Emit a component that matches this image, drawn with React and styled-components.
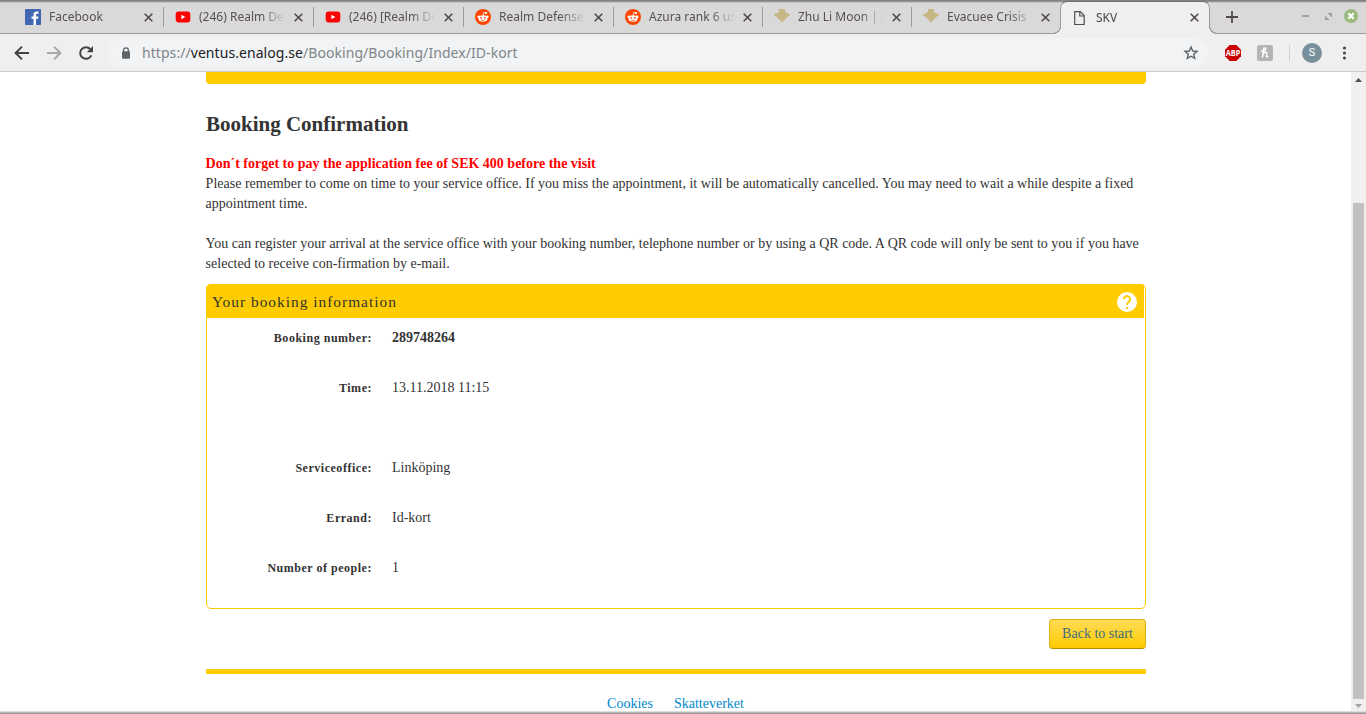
import React from 'react';
import styled, { createGlobalStyle } from 'styled-components';

const GlobalStyle = createGlobalStyle`
  * { box-sizing: border-box; }
  body { margin: 0; overflow: hidden; background: #fff; }
`;

const Window = styled.div`
  width: 1366px;
  height: 714px;
  display: flex;
  flex-direction: column;
  overflow: hidden;
  background: #fff;
`;

const TabStrip = styled.div`
  flex: none;
  height: 34px;
  display: flex;
  align-items: stretch;
  padding-left: 13px;
  background: linear-gradient(#828282 0 1px, #929292 1px 2px, #c4c4c4 2px 3px, #d9d9d9 3px);
  border-bottom: 1px solid #9c9c9c;
  font: 12px/16px 'Noto Sans', sans-serif;
  color: #5a4f50;
`;

const Tab = styled.div`
  position: relative;
  flex: none;
  width: ${(p) => p.$width}px;
  display: flex;
  align-items: center;
  padding: 1px 0 0 12px;
  &::after {
    content: '';
    position: absolute;
    right: -1px;
    top: 7px;
    width: 1px;
    height: 20px;
    background: ${(p) => (p.$last ? 'transparent' : '#9b9b9b')};
  }
`;

const corner = (side) => `radial-gradient(circle at ${side} 0, #d9d9d9 6.5px, #9c9c9c 7px 7.8px, #efefef 8.2px)`;

const ActiveTab = styled.div`
  position: relative;
  z-index: 1;
  flex: none;
  width: 150px;
  margin: 1px 0 -1px;
  display: flex;
  align-items: center;
  padding: 0 0 1px 11px;
  background: #efefef;
  border: 1px solid #9c9c9c;
  border-top-color: #6f6f6f;
  border-bottom: 0;
  border-radius: 7px 7px 0 0;
  color: #4a4546;
  &::before, &::after {
    content: '';
    position: absolute;
    bottom: 0;
    width: 8px;
    height: 8px;
  }
  &::before { left: -8px; background: ${corner('0')}; }
  &::after { right: -8px; background: ${corner('100%')}; }
`;

const Favicon = styled.span`
  flex: none;
  width: 16px;
  height: 16px;
  margin-right: 8px;
  svg { display: block; }
`;

const TabTitle = styled.span`
  flex: none;
  width: 87px;
  overflow: hidden;
  white-space: nowrap;
  mask-image: linear-gradient(90deg, #000 62px, transparent 86px);
`;

const CloseIcon = styled.svg`
  flex: none;
  width: 9px;
  height: 9px;
  margin-left: ${(p) => (p.$tight ? 6.5 : 7.5)}px;
`;

const NewTab = styled.svg`
  flex: none;
  width: 12px;
  height: 12px;
  margin: 11px 0 0 16px;
`;

const WindowButtons = styled.div`
  display: flex;
  align-items: center;
  gap: 16px;
  height: 32px;
  margin-left: auto;
  padding-right: 8px;
  svg { display: block; }
  svg:last-child { margin-left: -4px; }
`;

const Toolbar = styled.div`
  flex: none;
  height: 38px;
  display: flex;
  align-items: center;
  padding: 0 13px 0 14px;
  background: #efefef;
  border-bottom: 1px solid #cbcbcb;
`;

const NavButtons = styled.div`
  display: flex;
  gap: 16px;
  svg { display: block; }
`;

const Omnibox = styled.div`
  width: 1101px;
  height: 29px;
  margin-left: 14px;
  display: flex;
  align-items: center;
  padding: 0 10px 0 13px;
  border-radius: 15px;
  background: #f1f3f4;
  font: 14px/20px 'Noto Sans', sans-serif;
  color: #80868b;
  b { font-weight: 400; color: #202124; }
`;

const Url = styled.span`
  margin-left: 11px;
  letter-spacing: 0.06px;
  white-space: nowrap;
`;

const StarIcon = styled.svg`
  margin-left: auto;
`;

const Extensions = styled.div`
  flex: 1;
  display: flex;
  align-items: center;
  margin-left: 16px;
  gap: 16px;
  svg { display: block; }
`;

const ToolSeparator = styled.span`
  width: 1px;
  height: 16px;
  margin-right: -4px;
  background: #cfcfcf;
`;

const Avatar = styled.span`
  width: 20px;
  height: 20px;
  border-radius: 50%;
  background: #78909c;
  color: #fff;
  font: 11px/20px Roboto, sans-serif;
  text-align: center;
`;

const MenuDots = styled.svg`
  margin-left: 4px;
`;

const Viewport = styled.div`
  flex: 1;
  min-height: 0;
  display: flex;
`;

const Page = styled.main`
  flex: 1;
  padding-left: 206px;
  overflow: hidden;
  font: 14px/20px 'Liberation Serif', serif;
  color: #333;
`;

const Content = styled.div`
  width: 940px;
  display: flex;
  flex-direction: column;
`;

const TopBar = styled.div`
  height: 12px;
  border-radius: 0 0 4px 4px;
  background: #fc0;
`;

const Heading = styled.h1`
  margin: 25px 0 15px;
  font-size: 21px;
  line-height: 30px;
`;

const Warning = styled.strong`
  margin-left: -0.4px;
  color: #f00;
`;

const Paragraph = styled.p`
  margin: 0 0 ${(p) => p.$gap}px -0.4px;
  white-space: nowrap;
`;

const Panel = styled.section`
  height: 325px;
  border: 1px solid #fc0;
  border-radius: 5px;
  padding-right: 1px;
`;

const PanelHeader = styled.header`
  height: 34px;
  margin: -1px 0 0 -1px;
  padding: 1px 7px 0 6px;
  display: flex;
  align-items: center;
  justify-content: space-between;
  background: #fc0;
  border-radius: 5px 3px 0 0;
  font-size: 15.4px;
  letter-spacing: 1px;
`;

const Details = styled.dl`
  margin: 0;
  padding-top: 10px;
`;

const DetailRow = styled.div`
  display: flex;
  height: ${(p) => p.$height}px;
`;

const Label = styled.dt`
  width: 165px;
  text-align: right;
  font-size: 12px;
  font-weight: 700;
  letter-spacing: 0.52px;
`;

const Value = styled.dd`
  margin: 0 0 0 20px;
  font-weight: ${(p) => (p.$bold ? 700 : 400)};
`;

const BackButton = styled.button`
  align-self: flex-end;
  width: 97px;
  height: 30px;
  margin: 10px 0 20px;
  padding: 0;
  border: 1px solid #e0b010;
  border-bottom-color: #b38f00;
  border-radius: 4px;
  background: linear-gradient(#ffdb57, #fc0);
  color: #3d6a84;
  font: 14px/20px 'Liberation Serif', serif;
  white-space: nowrap;
`;

const FooterRule = styled.div`
  height: 5px;
  background: #fc0;
`;

const FooterLinks = styled.footer`
  display: flex;
  justify-content: center;
  gap: 21px;
  margin-top: 20px;
  padding-right: 1px;
`;

const FooterLink = styled.a`
  color: #08c;
`;

const Scrollbar = styled.div`
  flex: none;
  width: 15px;
  display: flex;
  flex-direction: column;
  align-items: center;
  padding: 6px 2px 5px;
  background: #f0f0f0;
  svg { flex: none; display: block; }
`;

const Thumb = styled.div`
  flex: none;
  width: 11px;
  height: 496px;
  margin: 121px 0 5px;
  background: #c1c1c1;
`;

const BottomEdge = styled.div`
  flex: none;
  height: 3px;
  background: linear-gradient(#dedede 0 1px, #b5b5b5 1px 2px, #999 2px);
`;

const Facebook = () => (
  <svg width="16" height="16" viewBox="0 0 16 16">
    <rect width="16" height="16" rx=".7" fill="#4267b2" />
    <path d="M11 16V9.8h2.1l.3-2.4H11V5.9c0-.7.2-1.2 1.2-1.2h1.3V2.6c-.2 0-1-.1-1.9-.1-1.8 0-3.1 1.1-3.1 3.2v1.7h-2v2.4h2V16z" fill="#fff" />
  </svg>
);

const YouTube = () => (
  <svg width="16" height="16" viewBox="0 0 16 16">
    <rect x=".7" y="2.6" width="14.6" height="10.8" rx="2.8" fill="#f00" />
    <path d="M6.4 5.8v4.4L10.4 8z" fill="#fff" />
  </svg>
);

const Reddit = () => (
  <svg width="16" height="16" viewBox="0 0 16 16">
    <circle cx="8" cy="8" r="8" fill="#ff4500" />
    <path d="M8 6.6l.7-3.1 2.3.5" fill="none" stroke="#fff" strokeWidth=".8" />
    <circle cx="11.1" cy="4.1" r="1.1" fill="#fff" />
    <circle cx="3.7" cy="7.8" r="1.3" fill="#fff" />
    <circle cx="12.3" cy="7.8" r="1.3" fill="#fff" />
    <ellipse cx="8" cy="9.5" rx="4.5" ry="3.3" fill="#fff" />
    <circle cx="6.1" cy="8.8" r=".9" fill="#ff4500" />
    <circle cx="9.9" cy="8.8" r=".9" fill="#ff4500" />
    <path d="M6.1 11q1.9 1.2 3.8 0" fill="none" stroke="#ff4500" strokeWidth=".7" />
  </svg>
);

const Emblem = () => (
  <svg width="16" height="16" viewBox="0 0 16 16">
    <path d="M5 0h6v2.2L12.5 4 16 5.3v1L13 8.2l-5 5.2-5-5.2-3-1.9v-1L3.500 4 5 2.200z" fill="#c5b783" />
  </svg>
);

const Document = () => (
  <svg width="16" height="16" viewBox="0 0 16 16" fill="none" stroke="#505050" strokeWidth="1.2">
    <path d="M2.700 1.600h5.600l3.900 3.900v9.000H2.700z" />
    <path d="M7.800 1.900v4.100h4.200" />
  </svg>
);

const Close = ({ tight }) => (
  <CloseIcon $tight={tight} viewBox="0 0 9 9" stroke="#51484a" strokeWidth="1.6">
    <path d="M.7.7l7.6 7.6M8.3.7L.7 8.3" />
  </CloseIcon>
);

const tabs = [
  { title: 'Facebook', icon: Facebook, width: 150 },
  { title: '(246) Realm De', icon: YouTube, width: 150 },
  { title: '(246) [Realm De', icon: YouTube, width: 150 },
  { title: 'Realm Defense', icon: Reddit, width: 150 },
  { title: 'Azura rank 6 us', icon: Reddit, width: 149 },
  { title: 'Zhu Li Moon | A', icon: Emblem, width: 149 },
  { title: 'Evacuee Crisis', icon: Emblem, width: 149 },
];

const details = [
  { label: 'Booking number:', value: '289748264', bold: true, height: 50 },
  { label: 'Time:', value: '13.11.2018 11:15', height: 80 },
  { label: 'Serviceoffice:', value: 'Linköping', height: 50 },
  { label: 'Errand:', value: 'Id-kort', height: 50 },
  { label: 'Number of people:', value: '1', height: 50 },
];

function BrowserTabs() {
  return (
    <TabStrip>
      {tabs.map(({ title, icon: Icon, width }, i) => (
        <Tab key={title} $width={width} $last={i === tabs.length - 1}>
          <Favicon><Icon /></Favicon>
          <TabTitle>{title}</TabTitle>
          <Close tight={width < 150} />
        </Tab>
      ))}
      <ActiveTab>
        <Favicon><Document /></Favicon>
        <TabTitle>SKV</TabTitle>
        <Close tight />
      </ActiveTab>
      <NewTab viewBox="0 0 12 12" stroke="#51484a" strokeWidth="1.8">
        <path d="M6 0v12M0 6h12" />
      </NewTab>
      <WindowButtons>
        <svg width="7" height="2"><rect width="7" height="2" fill="#9b9fa5" /></svg>
        <svg width="7" height="7" fill="#9b9fa5"><path d="M2.5 0H7v4.5zM0 2.5V7h4.5z" /></svg>
        <svg width="14" height="14" viewBox="0 0 14 14">
          <circle cx="7" cy="7" r="7" fill="#9ab87c" />
          <path d="M4.3 4.3l5.4 5.4M9.7 4.3L4.3 9.7" stroke="#fff" strokeWidth="2.2" />
        </svg>
      </WindowButtons>
    </TabStrip>
  );
}

function BrowserToolbar() {
  return (
    <Toolbar>
      <NavButtons>
        <svg width="16" height="16" viewBox="0 0 16 16" fill="none" stroke="#434343" strokeWidth="2">
          <path d="M15 8H2.5M8 1.6L1.6 8 8 14.4" />
        </svg>
        <svg width="16" height="16" viewBox="0 0 16 16" fill="none" stroke="#a8a8a8" strokeWidth="2">
          <path d="M1 8h12.5M8 1.6L14.4 8 8 14.4" />
        </svg>
        <svg width="16" height="16" viewBox="0 0 16 16">
          <path d="M13.3 10.3A5.8 5.8 0 1 1 12.2 4" fill="none" stroke="#434343" strokeWidth="2" />
          <path d="M15 1v6.2H8.8z" fill="#434343" />
        </svg>
      </NavButtons>
      <Omnibox>
        <svg width="10" height="12" viewBox="0 0 10 12">
          <path d="M2.6 5V3.2a2.4 2.4 0 0 1 4.8 0V5" fill="none" stroke="#5f6368" strokeWidth="1.3" />
          <rect x="1" y="4.3" width="8" height="7.4" rx=".9" fill="#5f6368" />
        </svg>
        <Url>https://<b>ventus.enalog.se</b>/Booking/Booking/Index/ID-kort</Url>
        <StarIcon width="16" height="16" viewBox="0 0 16 16" fill="none" stroke="#5f6368" strokeWidth="1.4">
          <path d="M8 2l1.7 4 4.3.4-3.3 2.8 1 4.2L8 11.2l-3.7 2.2 1-4.2L2 6.4 6.3 6z" />
        </StarIcon>
      </Omnibox>
      <Extensions>
        <svg width="16" height="16" viewBox="0 0 16 16">
          <path d="M4.7 0h6.6L16 4.7v6.6L11.3 16H4.7L0 11.3V4.7z" fill="#cb0000" />
          <text x="8" y="11" textAnchor="middle" textLength="14.6" lengthAdjust="spacingAndGlyphs" fill="#fff" fontFamily="Open Sans, sans-serif" fontWeight="700" fontSize="8.6">ABP</text>
        </svg>
        <svg width="16" height="16" viewBox="0 0 16 16">
          <rect width="16" height="16" rx="2.5" fill="#b4b4b4" />
          <path d="M6.8 2.8L5.5 12.3M4 6.2c2.8.2 4.6-.6 4.8-2.2.1-1.2-1.6-1.6-2.1.1M6.1 8.7c1.5-2 4.2-1.9 3.6.5-.4 1.800-.6 3.300 1.700 2.200" fill="none" stroke="#fff" strokeWidth="1.5" />
        </svg>
        <ToolSeparator />
        <Avatar>S</Avatar>
        <MenuDots width="5" height="14" fill="#4a4a4a">
          <circle cx="2.5" cy="2" r="1.6" /><circle cx="2.5" cy="7" r="1.6" /><circle cx="2.5" cy="12" r="1.6" />
        </MenuDots>
      </Extensions>
    </Toolbar>
  );
}

export default function App() {
  return (
    <Window>
      <GlobalStyle />
      <BrowserTabs />
      <BrowserToolbar />
      <Viewport>
        <Page>
          <Content>
            <TopBar />
            <Heading>Booking Confirmation</Heading>
            <Warning>Don´t forget to pay the application fee of SEK 400 before the visit</Warning>
            <Paragraph $gap={20}>
              Please remember to come on time to your service office. If you miss the appointment, it will be automatically cancelled. You may need to wait a while despite a fixed<br />
              appointment time.
            </Paragraph>
            <Paragraph $gap={10}>
              You can register your arrival at the service office with your booking number, telephone number or by using a QR code. A QR code will only be sent to you if you have<br />
              selected to receive con-firmation by e-mail.
            </Paragraph>
            <Panel>
              <PanelHeader>
                Your booking information
                <svg width="20" height="20" viewBox="0 0 20 20">
                  <circle cx="10" cy="10" r="10" fill="#fff" />
                  <path d="M6.9 7.3a3.1 3.1 0 1 1 5.3 2.1C11 10.6 10 11 10 13" fill="none" stroke="#fc0" strokeWidth="2" />
                  <rect x="9" y="15" width="2" height="2" fill="#fc0" />
                </svg>
              </PanelHeader>
              <Details>
                {details.map((d) => (
                  <DetailRow key={d.label} $height={d.height}>
                    <Label>{d.label}</Label>
                    <Value $bold={d.bold}>{d.value}</Value>
                  </DetailRow>
                ))}
              </Details>
            </Panel>
            <BackButton>Back to start</BackButton>
            <FooterRule />
            <FooterLinks>
              <FooterLink>Cookies</FooterLink>
              <FooterLink>Skatteverket</FooterLink>
            </FooterLinks>
          </Content>
        </Page>
        <Scrollbar>
          <svg width="7" height="4"><path d="M3.5 0L7 4H0z" fill="#505050" /></svg>
          <Thumb />
          <svg width="7" height="4"><path d="M3.5 4L7 0H0z" fill="#a3a3a3" /></svg>
        </Scrollbar>
      </Viewport>
      <BottomEdge />
    </Window>
  );
}
